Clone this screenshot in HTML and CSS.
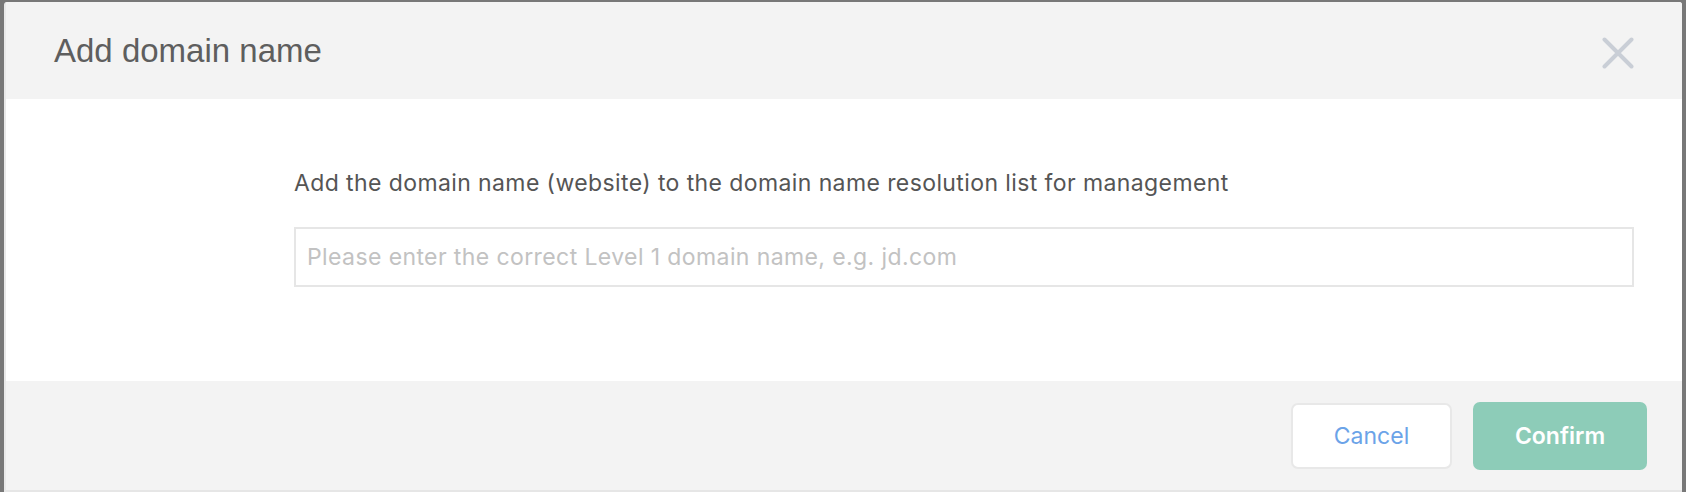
FILE: index.html
```html
<!DOCTYPE html>
<html lang="en">
<head>
<meta charset="utf-8">
<title>Add domain name</title>
<link rel="stylesheet" href="styles.css">
</head>
<body>
<div class="backdrop">
  <div class="modal">
    <div class="modal-header">
      <h2 class="modal-title">Add domain name</h2>
      <button class="close-btn" aria-label="Close">
        <svg width="32" height="32" viewBox="0 0 32 32"><path d="M2.5 2.5 L29.5 29.5 M29.5 2.5 L2.5 29.5" stroke="#c9ced6" stroke-width="4" stroke-linecap="round" fill="none"/></svg>
      </button>
    </div>
    <div class="modal-body">
      <p class="desc">Add the domain name (website) to the domain name resolution list for management</p>
      <input class="domain-input" type="text" placeholder="Please enter the correct Level 1 domain name, e.g. jd.com">
    </div>
    <div class="modal-footer">
      <button class="btn btn-cancel">Cancel</button>
      <button class="btn btn-confirm">Confirm</button>
    </div>
  </div>
</div>
</body>
</html>
```
FILE: styles.css
```css
html, body {
  margin: 0;
  padding: 0;
  height: 100%;
}
body {
  background: #787878;
  font-family: "Liberation Sans", Arial, sans-serif;
}
.backdrop {
  padding: 2px 4px 0 4px;
  height: 100%;
  box-sizing: border-box;
}
.modal {
  background: #fff;
  border-left: 2px solid #e9e9e9;
  border-bottom: 2px solid #e6e6e6;
  border-radius: 3px 3px 0 0;
  overflow: hidden;
  display: flex;
  flex-direction: column;
}
.modal-header {
  height: 97px;
  background: #f3f3f3;
  display: flex;
  align-items: center;
  justify-content: space-between;
  padding: 0 48px 0 48px;
}
.modal-title {
  margin: 0;
  font-weight: normal;
  font-size: 33px;
  color: #5e5e5e;
  font-family: "Liberation Sans", Arial, sans-serif;
  padding-top: 0;
}
.close-btn {
  border: 0;
  background: transparent;
  padding: 0;
  width: 32px;
  height: 32px;
  display: flex;
  margin-top: 4px;
}
.modal-body {
  height: 282px;
  padding: 0 48px 0 288px;
  display: flex;
  flex-direction: column;
}
.desc {
  margin: 68px 0 0 0;
  font-family: Inter, "Liberation Sans", sans-serif;
  font-size: 23px;
  letter-spacing: 0.4px;
  color: #555;
  line-height: 32px;
}
.domain-input {
  margin-top: 28px;
  height: 60px;
  box-sizing: border-box;
  border: 2px solid #e6e6e6;
  padding: 0 11px;
  font-family: Inter, "Liberation Sans", sans-serif;
  font-size: 23px;
  letter-spacing: 0.4px;
  color: #555;
  outline: none;
}
.domain-input::placeholder {
  color: #c2c2c2;
}
.modal-footer {
  height: 109px;
  background: #f3f3f3;
  display: flex;
  align-items: center;
  justify-content: flex-end;
  gap: 21px;
  padding: 0 35px 0 0;
}
.btn {
  font-family: Inter, "Liberation Sans", sans-serif;
  font-size: 23px;
  border-radius: 7px;
  cursor: pointer;
}
.btn-cancel {
  width: 161px;
  height: 66px;
  background: #fff;
  border: 2px solid #e8e8e8;
  color: #6ba3e8;
}
.btn-confirm {
  width: 174px;
  height: 68px;
  background: #8dccb8;
  border: 0;
  color: #fff;
  font-weight: 600;
}
```
